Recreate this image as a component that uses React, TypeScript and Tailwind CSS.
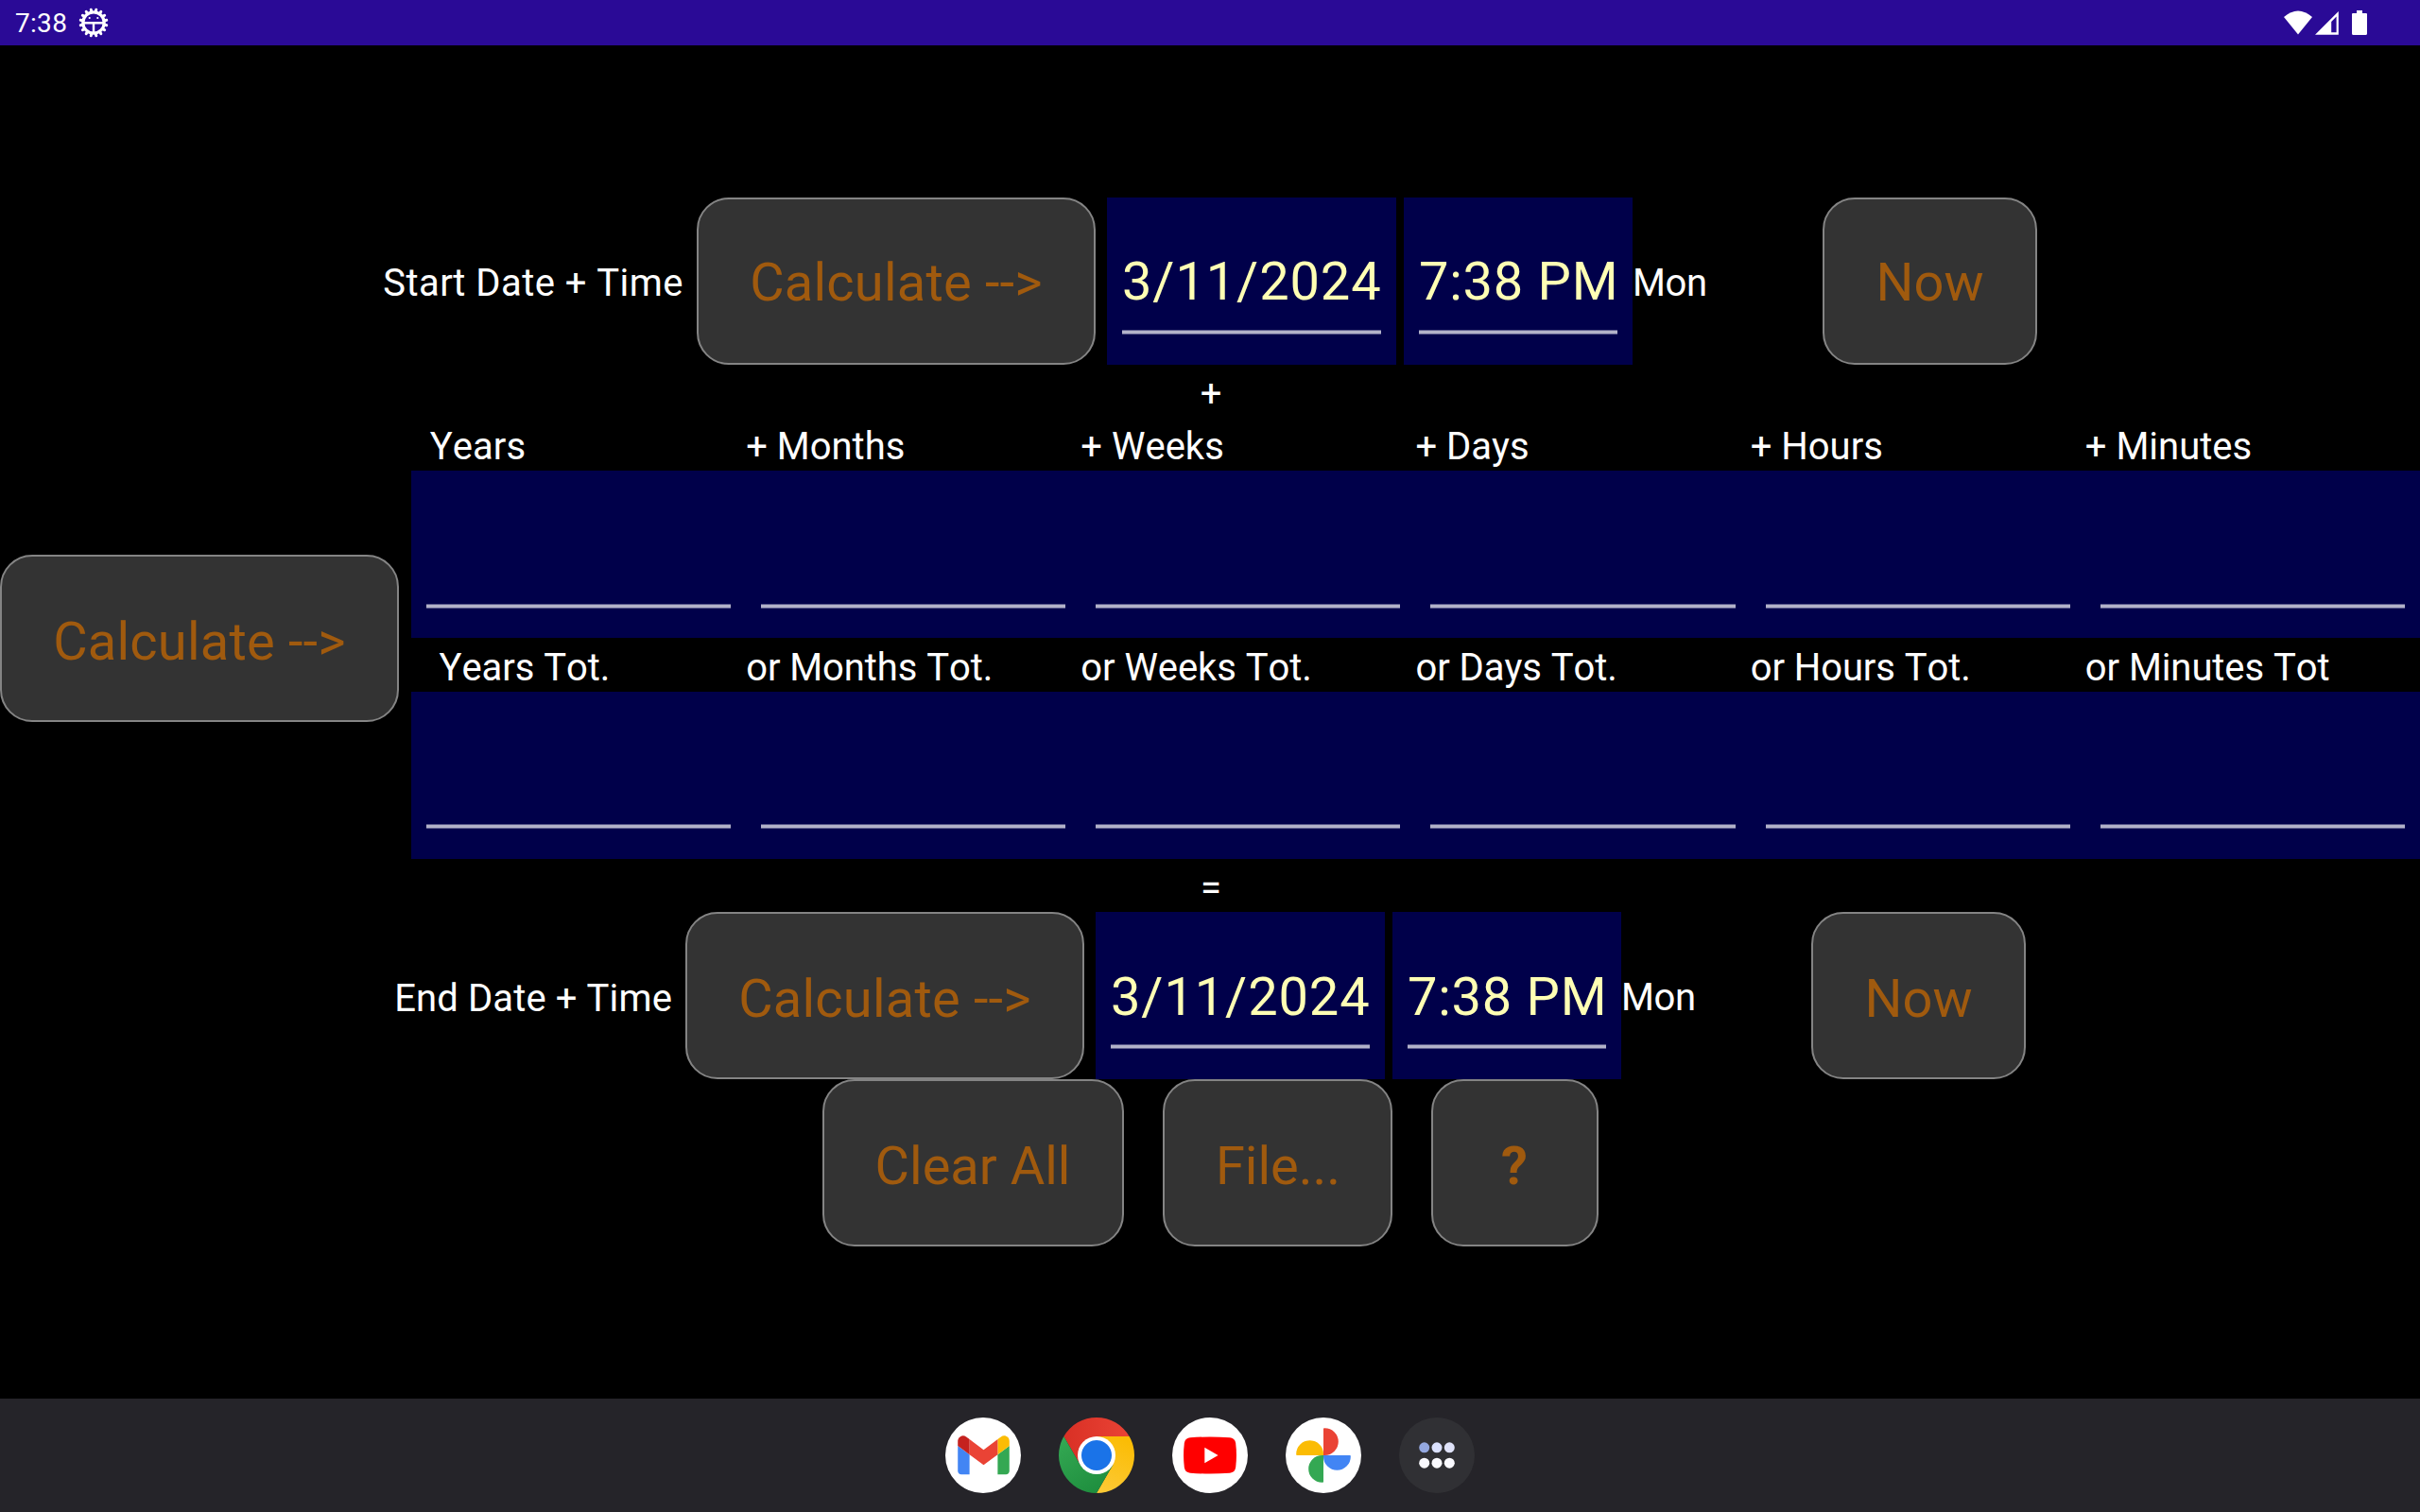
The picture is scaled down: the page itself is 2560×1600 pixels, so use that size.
import React from "react";

const BTN = "flex h-[177px] shrink-0 items-center justify-center rounded-[34px] border-2 border-[#848484] bg-[#333333] text-[56px] leading-[66px] text-[#a05a0e] whitespace-pre";

function Button({ label, className }: { label: string; className: string }) {
  return <button className={`${BTN} ${className}`}>{label}</button>;
}

function Field({ value, className, valueClass = "" }: { value?: string; className: string; valueClass?: string }) {
  return (
    <div className={`flex h-[177px] flex-col justify-end bg-[#00004a] px-4 ${className}`}>
      {value && (
        <span className={`text-[56px] leading-[66px] whitespace-pre text-[#ffffb4] ${valueClass}`}>{value}</span>
      )}
      <div className="h-[5px] border-y border-[#5a5a8c] bg-[#b2b2c9]" />
    </div>
  );
}

type DateRowProps = {
  label: string;
  className: string;
  labelClass: string;
  buttonClass: string;
  valueClass: string;
};

function DateRow({ label, className, labelClass, buttonClass, valueClass }: DateRowProps) {
  return (
    <div className={`flex h-[177px] items-center ${className}`}>
      <span className={`flex-1 text-right text-[40px] leading-[47px] whitespace-pre ${labelClass}`}>{label}</span>
      <Button label="Calculate --&gt;" className={`ml-[14px] w-[422px] tracking-[0.2px] ${buttonClass}`} />
      <Field value="3/11/2024" className="ml-3 w-[306px] pb-8 tracking-[0.9px]" valueClass={valueClass} />
      <Field value="7:38 PM" className="ml-2 w-[242px] pb-8 tracking-[0.75px]" valueClass={valueClass} />
      <span className="w-[201px] pt-[4px] text-[40px] leading-[47px] tracking-[-0.4px]">Mon</span>
      <Button label="Now" className={`w-[227px] ${buttonClass}`} />
    </div>
  );
}

const PARTS = ["  Years", "+ Months", "+ Weeks", "+ Days", "+ Hours", "+ Minutes"];
const TOTALS = ["   Years Tot.", "or Months Tot.", "or Weeks Tot.", "or Days Tot.", "or Hours Tot.", "or Minutes Tot"];

function FieldGrid({ labels, labelClass, fieldClass }: { labels: string[]; labelClass: string; fieldClass: string }) {
  return (
    <div className="grid grid-cols-6">
      {labels.map((l) => (
        <div key={l} className="flex flex-col">
          <span className={`text-[40px] leading-[47px] whitespace-pre ${labelClass}`}>{l}</span>
          <Field className={fieldClass} />
        </div>
      ))}
    </div>
  );
}

function GearIcon() {
  const teeth = Array.from({ length: 16 }, (_, i) => i * 22.5 + 11.25);
  return (
    <svg className="ml-[13px] h-8 w-8" viewBox="-16 -16 32 32" fill="none" stroke="white">
      <circle r="11.2" strokeWidth="3.2" />
      {teeth.map((a) => (
        <path key={a} d="M0-12V-14" strokeWidth="3" strokeLinecap="round" transform={`rotate(${a})`} />
      ))}
      <path d="M-11 .3H11M0 .3V12" strokeWidth="2.4" />
      <circle cx="-4.3" cy="-5" r="1.1" fill="white" stroke="none" />
      <circle cx="4.3" cy="-5" r="1.1" fill="white" stroke="none" />
    </svg>
  );
}

function StatusBar() {
  return (
    <header className="flex h-12 items-center bg-[#2a0a96] pl-4">
      <span className="mt-[2px] w-[54px] text-[28px] leading-8 tracking-[0.3px]">7:38</span>
      <GearIcon />
      <svg className="ml-auto mr-14 h-12 w-[88px]" viewBox="0 0 88 48" fill="white">
        <path d="M0 18Q15 5 30 18L15 36.500Z" />
        <path fillRule="evenodd" d="M33 36.700L57.800 12V36.700ZM50.200 34.300H55.600V17.500L50.200 23Z" />
        <path d="M72 15Q72 14 73 14H77V11H83V14H87Q88 14 88 15V35.500Q88 37 86.500 37H73.500Q72 37 72 35.500Z" />
      </svg>
    </header>
  );
}

function Gmail() {
  return (
    <svg className="size-20" viewBox="-40 -40 80 80">
      <circle r="40" fill="white" />
      <g transform="translate(.5 -.2) scale(.62) translate(-96 -75)">
        <path fill="#4285f4" d="M58 108h14V74L52 59v43c0 3.320 2.690 6 6 6" />
        <path fill="#34a853" d="M120 108h14c3.320 0 6-2.690 6-6V59l-20 15" />
        <path fill="#fbbc04" d="M120 48v26l20-15v-8c0-7.420-8.470-11.650-14.400-7.200" />
        <path fill="#ea4335" d="M72 74V48l24 18 24-18v26L96 92" />
        <path fill="#c5221f" d="M52 51v8l20 15V48l-5.600-4.200c-5.940-4.450-14.400-.22-14.400 7.200" />
      </g>
    </svg>
  );
}

function Chrome() {
  return (
    <svg className="size-20" viewBox="-40 -40 80 80">
      <defs>
        <linearGradient id="cr" x1="0" x2="1">
          <stop offset="0" stopColor="#d93025" />
          <stop offset="1" stopColor="#ea4335" />
        </linearGradient>
        <linearGradient id="cy" x1=".6" y1="0" x2=".3" y2="1">
          <stop offset="0" stopColor="#fbbc04" />
          <stop offset="1" stopColor="#fcc934" />
        </linearGradient>
        <linearGradient id="cg" x1=".7" y1="1" x2=".1" y2="0">
          <stop offset="0" stopColor="#1e8e3e" />
          <stop offset="1" stopColor="#34a853" />
        </linearGradient>
      </defs>
      <path fill="url(#cr)" d="M-34.640-20A40 40 0 0 1 34.640-20H0L-17.320 10Z" />
      <path fill="url(#cy)" d="M34.640-20A40 40 0 0 1 0 40L17.320 10L0-20Z" />
      <path fill="url(#cg)" d="M0 40A40 40 0 0 1-34.640-20L-17.320 10H17.320Z" />
      <circle r="20" fill="white" />
      <circle r="16" fill="#1a73e8" />
    </svg>
  );
}

function YouTube() {
  return (
    <svg className="size-20" viewBox="-40 -40 80 80">
      <circle r="40" fill="white" />
      <path
        fill="#ff0000"
        d="M-21-18.700Q0-20.300 21-18.700Q26.500-18.200 27.200-12.500Q28.700 0 27.200 12.500Q26.500 18.200 21 18.700Q0 20.300-21 18.700Q-26.500 18.200-27.200 12.500Q-28.700 0-27.200-12.500Q-26.500-18.200-21-18.700Z"
      />
      <path fill="white" d="M-5.700-8.300V8.300L8.600 0Z" />
    </svg>
  );
}

function Photos() {
  const petals: [string, number][] = [["#ea4335", 0], ["#4285f4", 90], ["#34a853", 180], ["#fbbc04", 270]];
  return (
    <svg className="size-20" viewBox="-40 -40 80 80">
      <circle r="40" fill="white" />
      {petals.map(([c, a]) => (
        <path key={c} fill={c} d="M0 0V-28A.8 .8 0 0 1 .8-28.800H1.400A14.400 14.400 0 0 1 1.400 0Z" transform={`rotate(${a})`} />
      ))}
    </svg>
  );
}

function AllApps() {
  return (
    <svg className="size-20" viewBox="-40 -40 80 80">
      <circle r="40" fill="#303034" />
      <circle cx="-13.300" cy="-8.200" r="5.500" fill="#94a8e0" />
      <circle cx="0" cy="-8.200" r="5.500" fill="#dbe1ff" />
      <circle cx="13.300" cy="-8.200" r="5.500" fill="#dfe2f9" />
      <circle cx="-13.300" cy="8.200" r="5.500" fill="#fafaff" />
      <circle cx="0" cy="8.200" r="5.500" fill="#fafaff" />
      <circle cx="13.300" cy="8.200" r="5.500" fill="#fafaff" />
    </svg>
  );
}

export default function App() {
  return (
    <div className="flex h-[1600px] w-[2560px] flex-col overflow-hidden bg-black font-[Roboto,sans-serif] text-white [font-kerning:none]">
      <StatusBar />
      <main className="flex flex-1 flex-col pt-[161px]">
        <DateRow
          label="Start Date + Time"
          className="w-[2155px]"
          labelClass="pt-[4px] tracking-[0.46px]"
          buttonClass="pt-[3px]"
          valueClass="mb-[18px]"
        />
        <div className="flex h-[56px] items-center justify-center pt-[4px] pl-[2px] text-[40px] leading-[47px]">+</div>
        <div className="flex h-[467px] items-center">
          <Button label="Calculate --&gt;" className="w-[422px] pt-[6px] tracking-[0.2px]" />
          <div className="ml-[13px] flex-1">
            <FieldGrid labels={PARTS} labelClass="h-[56px] pt-[7px]" fieldClass="pb-[31px]" />
            <FieldGrid labels={TOTALS} labelClass="h-[57px] pt-[8px] tracking-[-0.08px]" fieldClass="pb-8" />
          </div>
        </div>
        <div className="flex h-[56px] items-center justify-center pt-[4px] pl-[2px] text-[40px] leading-[47px]">=</div>
        <DateRow
          label="End Date + Time"
          className="w-[2143px]"
          labelClass="pt-[6px] tracking-[0.12px]"
          buttonClass="pt-[6px]"
          valueClass="mb-[17px]"
        />
        <div className="flex justify-center gap-[41px]">
          <Button label="Clear All" className="w-[319px] pt-[6px]" />
          <Button label="File..." className="w-[243px] pt-[6px] pl-[2px]" />
          <Button label="?" className="w-[177px] pt-[6px] font-bold" />
        </div>
      </main>
      <footer className="flex h-[120px] items-center justify-center gap-10 bg-[#252429]">
        <Gmail />
        <Chrome />
        <YouTube />
        <Photos />
        <AllApps />
      </footer>
    </div>
  );
}
